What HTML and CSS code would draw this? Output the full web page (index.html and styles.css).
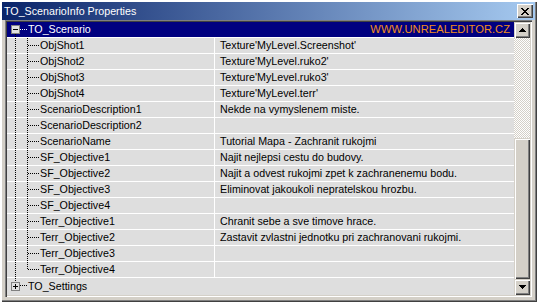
FILE: index.html
```html
<!DOCTYPE html>
<html lang="en">

<head>
	<meta charset="UTF-8">
	<title>TO_ScenarioInfo Properties</title>
	<link rel="stylesheet" href="styles.css">
</head>

<body>
	<div class="window">
		<header class="titlebar">
			<span class="title">TO_ScenarioInfo Properties</span>
			<span class="close">
				<svg width="8" height="7" viewBox="0 0 8 7" shape-rendering="crispEdges">
					<path d="M0 0h2v1h-2zM6 0h2v1h-2zM1 1h2v1h-2zM5 1h2v1h-2zM2 2h4v1h-4zM3 3h2v1h-2zM2 4h4v1h-4zM1 5h2v1h-2zM5 5h2v1h-2zM0 6h2v1h-2zM6 6h2v1h-2z" fill="#000" />
				</svg>
			</span>
		</header>
		<div class="client">
			<div class="tree">
				<div class="row root open selected">
					<span class="box">
						<svg width="9" height="9" viewBox="0 0 9 9" shape-rendering="crispEdges">
							<rect x="0.5" y="0.5" width="8" height="8" fill="#e0e0e0" stroke="#808080" />
							<path d="M2 4h5v1h-5z" fill="#000" />
						</svg>
					</span>
					<span class="label">TO_Scenario</span>
					<span class="site">WWW.UNREALEDITOR.CZ</span>
				</div>
				<div class="row"><span class="name">ObjShot1</span><span class="value">Texture'MyLevel.Screenshot'</span></div>
				<div class="row"><span class="name">ObjShot2</span><span class="value">Texture'MyLevel.ruko2'</span></div>
				<div class="row"><span class="name">ObjShot3</span><span class="value">Texture'MyLevel.ruko3'</span></div>
				<div class="row"><span class="name">ObjShot4</span><span class="value">Texture'MyLevel.terr'</span></div>
				<div class="row"><span class="name">ScenarioDescription1</span><span class="value">Nekde na vymyslenem miste.</span></div>
				<div class="row"><span class="name">ScenarioDescription2</span><span class="value"></span></div>
				<div class="row"><span class="name">ScenarioName</span><span class="value">Tutorial Mapa - Zachranit rukojmi</span></div>
				<div class="row"><span class="name">SF_Objective1</span><span class="value">Najit nejlepsi cestu do budovy.</span></div>
				<div class="row"><span class="name">SF_Objective2</span><span class="value">Najit a odvest rukojmi zpet k zachranenemu bodu.</span></div>
				<div class="row"><span class="name">SF_Objective3</span><span class="value">Eliminovat jakoukoli nepratelskou hrozbu.</span></div>
				<div class="row"><span class="name">SF_Objective4</span><span class="value"></span></div>
				<div class="row"><span class="name">Terr_Objective1</span><span class="value">Chranit sebe a sve timove hrace.</span></div>
				<div class="row"><span class="name">Terr_Objective2</span><span class="value">Zastavit zvlastni jednotku pri zachranovani rukojmi.</span></div>
				<div class="row"><span class="name">Terr_Objective3</span><span class="value"></span></div>
				<div class="row last"><span class="name">Terr_Objective4</span><span class="value"></span></div>
				<div class="row root closed">
					<span class="box">
						<svg width="9" height="9" viewBox="0 0 9 9" shape-rendering="crispEdges">
							<rect x="0.5" y="0.5" width="8" height="8" fill="#e0e0e0" stroke="#808080" />
							<path d="M2 4h5v1h-5zM4 2h1v5h-1z" fill="#000" />
						</svg>
					</span>
					<span class="label">TO_Settings</span>
				</div>
			</div>
			<div class="scrollbar">
				<span class="sbtn">
					<svg width="7" height="4" viewBox="0 0 7 4" shape-rendering="crispEdges">
						<path d="M3 0h1v1h-1zM2 1h3v1h-3zM1 2h5v1h-5zM0 3h7v1h-7z" fill="#000" />
					</svg>
				</span>
				<span class="track"></span>
				<span class="thumb"></span>
				<span class="sbtn">
					<svg width="7" height="4" viewBox="0 0 7 4" shape-rendering="crispEdges">
						<path d="M0 0h7v1h-7zM1 1h5v1h-5zM2 2h3v1h-3zM3 3h1v1h-1z" fill="#000" />
					</svg>
				</span>
			</div>
		</div>
	</div>
</body>

</html>
```

FILE: styles.css
```css
*:root {
	--face: #d4d0c8;
	--shadow: #808080;
	--dark: #404040;
	--cell: #dedede;
	--dots-v: repeating-linear-gradient(to bottom, #000 0 1px, transparent 1px 2px);
	--dots-h: repeating-linear-gradient(to right, #000 0 1px, transparent 1px 2px);
}

* {
	padding: 0;
	margin: 0;
	box-sizing: border-box;
}

body {
	font-family: "Liberation Sans", Arial, sans-serif;
	font-size: 10.7px;
	background-color: var(--face);
}

.window {
	width: 537px;
	height: 302px;
	padding: 2px;
	display: flex;
	flex-flow: column nowrap;
	background-color: var(--face);
	box-shadow: inset 2px 2px #fff, inset -1px -1px var(--dark), inset -2px -2px var(--shadow);
}

.titlebar {
	flex: 0 0 18px;
	display: flex;
	align-items: center;
	padding: 0 2px;
	background: linear-gradient(to right, #0a246a, #a6caf0);
	color: white;
}

.title {
	flex: 1 1 auto;
	line-height: 18px;
}

.close {
	width: 16px;
	height: 14px;
	display: flex;
	align-items: center;
	justify-content: center;
	background-color: var(--face);
	box-shadow: inset 1px 1px #fff, inset -1px -1px var(--dark), inset -2px -2px var(--shadow);
}

.client {
	flex: 1 1 auto;
	display: flex;
	margin: 0 3px 3px 3px;
	padding: 2px;
	box-shadow: inset 1px 1px var(--shadow), inset 2px 2px var(--dark), inset -1px -1px #fff, inset -2px -2px var(--face);
}

.tree {
	flex: 1 1 auto;
	display: flex;
	flex-flow: column nowrap;
	background-color: var(--cell);
	overflow: hidden;
}

.row {
	flex: 0 0 16px;
	display: flex;
	align-items: stretch;
	border-bottom: 1px solid #fff;
	line-height: 15px;
	white-space: nowrap;
}

.row>.name {
	flex: 0 0 208px;
	padding-left: 33px;
	border-right: 1px solid #fff;
	background:
		var(--dots-v) 8px 0 / 1px 100% no-repeat,
		var(--dots-v) 20px 0 / 1px 100% no-repeat,
		var(--dots-h) 21px 7px / 11px 1px no-repeat;
}

.row.last>.name {
	background:
		var(--dots-v) 8px 0 / 1px 100% no-repeat,
		var(--dots-v) 20px 0 / 1px 8px no-repeat,
		var(--dots-h) 21px 7px / 11px 1px no-repeat;
}

.row>.value {
	flex: 1 1 auto;
	padding-left: 5px;
}

.row.root {
	align-items: center;
	padding-left: 4px;
}

.row.root>.box {
	display: flex;
	margin-right: 8px;
}

.row.root>.label {
	flex: 1 1 auto;
}

.row.open {
	background:
		repeating-linear-gradient(to right, #fff 0 1px, transparent 1px 2px) 13px 7px / 7px 1px no-repeat,
		var(--dots-v) 8px 12px / 1px 3px no-repeat;
}

.row.closed {
	border-bottom: none;
	background:
		var(--dots-h) 13px 7px / 7px 1px no-repeat,
		var(--dots-v) 8px 0 / 1px 3px no-repeat;
}

.row.selected {
	background-color: #000080;
	color: white;
}

.site {
	color: #f08c1c;
	font-size: 11.2px;
	padding-right: 4px;
}

.scrollbar {
	flex: 0 0 16px;
	display: flex;
	flex-flow: column nowrap;
}

.sbtn {
	flex: 0 0 16px;
	display: flex;
	align-items: center;
	justify-content: center;
	background-color: var(--face);
	box-shadow: inset 1px 1px var(--face), inset 2px 2px #fff, inset -1px -1px var(--dark), inset -2px -2px var(--shadow);
}

.track {
	flex: 0 0 100px;
	background: repeating-conic-gradient(#fff 0 25%, var(--face) 0 50%) 0 0 / 2px 2px;
}

.thumb {
	flex: 1 1 auto;
	background-color: var(--face);
	box-shadow: inset 1px 1px var(--face), inset 2px 2px #fff, inset -1px -1px var(--dark), inset -2px -2px var(--shadow);
}
```
